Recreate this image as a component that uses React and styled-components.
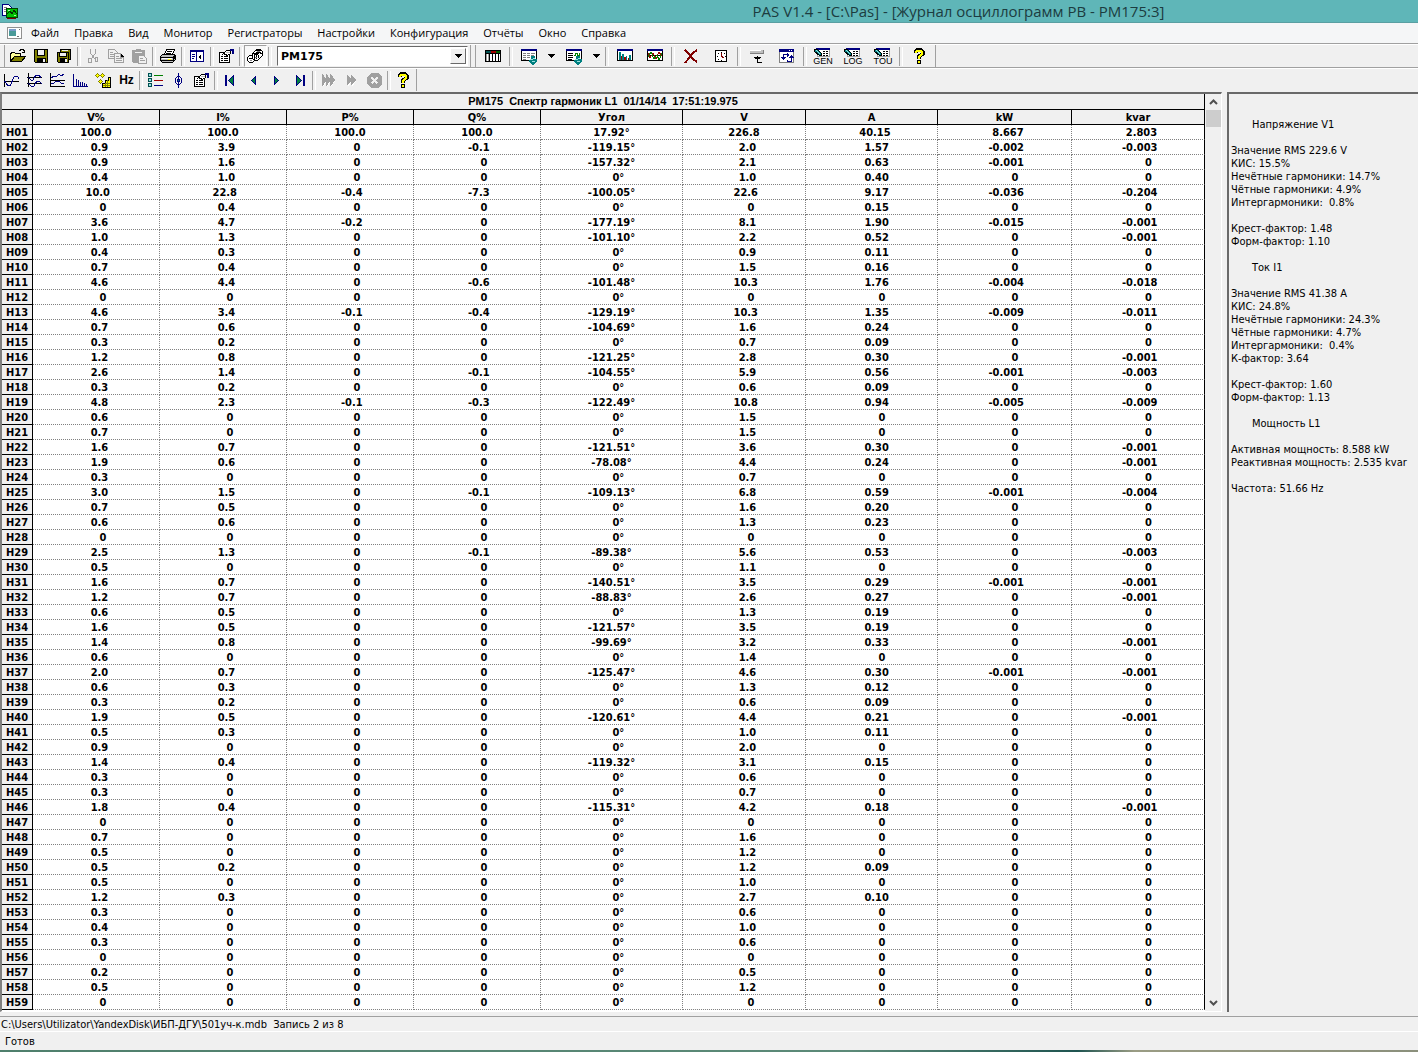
import styled, { createGlobalStyle } from "styled-components";

const menu = ['Файл', 'Правка', 'Вид', 'Монитор', 'Регистраторы', 'Настройки', 'Конфигурация', 'Отчёты', 'Окно', 'Справка'];

// minimum text length of a value: shorter ones are padded with leading spaces
const columns = [
    { title: 'V%', width: 127, pad: 5 },
    { title: 'I%', width: 127, pad: 5 },
    { title: 'P%', width: 127, pad: 5 },
    { title: 'Q%', width: 127, pad: 5 },
    { title: 'Угол', width: 142, pad: 5 },
    { title: 'V', width: 123, pad: 5 },
    { title: 'A', width: 132, pad: 7 },
    { title: 'kW', width: 134, pad: 7 },
    { title: 'kvar', width: 133, pad: 7 },
];

const harmonics = `
100.0 100.0 100.0 100.0 17.92 226.8 40.15 8.667 2.803
0.9 3.9 0 -0.1 -119.15 2.0 1.57 -0.002 -0.003
0.9 1.6 0 0 -157.32 2.1 0.63 -0.001 0
0.4 1.0 0 0 0 1.0 0.40 0 0
10.0 22.8 -0.4 -7.3 -100.05 22.6 9.17 -0.036 -0.204
0 0.4 0 0 0 0 0.15 0 0
3.6 4.7 -0.2 0 -177.19 8.1 1.90 -0.015 -0.001
1.0 1.3 0 0 -101.10 2.2 0.52 0 -0.001
0.4 0.3 0 0 0 0.9 0.11 0 0
0.7 0.4 0 0 0 1.5 0.16 0 0
4.6 4.4 0 -0.6 -101.48 10.3 1.76 -0.004 -0.018
0 0 0 0 0 0 0 0 0
4.6 3.4 -0.1 -0.4 -129.19 10.3 1.35 -0.009 -0.011
0.7 0.6 0 0 -104.69 1.6 0.24 0 0
0.3 0.2 0 0 0 0.7 0.09 0 0
1.2 0.8 0 0 -121.25 2.8 0.30 0 -0.001
2.6 1.4 0 -0.1 -104.55 5.9 0.56 -0.001 -0.003
0.3 0.2 0 0 0 0.6 0.09 0 0
4.8 2.3 -0.1 -0.3 -122.49 10.8 0.94 -0.005 -0.009
0.6 0 0 0 0 1.5 0 0 0
0.7 0 0 0 0 1.5 0 0 0
1.6 0.7 0 0 -121.51 3.6 0.30 0 -0.001
1.9 0.6 0 0 -78.08 4.4 0.24 0 -0.001
0.3 0 0 0 0 0.7 0 0 0
3.0 1.5 0 -0.1 -109.13 6.8 0.59 -0.001 -0.004
0.7 0.5 0 0 0 1.6 0.20 0 0
0.6 0.6 0 0 0 1.3 0.23 0 0
0 0 0 0 0 0 0 0 0
2.5 1.3 0 -0.1 -89.38 5.6 0.53 0 -0.003
0.5 0 0 0 0 1.1 0 0 0
1.6 0.7 0 0 -140.51 3.5 0.29 -0.001 -0.001
1.2 0.7 0 0 -88.83 2.6 0.27 0 -0.001
0.6 0.5 0 0 0 1.3 0.19 0 0
1.6 0.5 0 0 -121.57 3.5 0.19 0 0
1.4 0.8 0 0 -99.69 3.2 0.33 0 -0.001
0.6 0 0 0 0 1.4 0 0 0
2.0 0.7 0 0 -125.47 4.6 0.30 -0.001 -0.001
0.6 0.3 0 0 0 1.3 0.12 0 0
0.3 0.2 0 0 0 0.6 0.09 0 0
1.9 0.5 0 0 -120.61 4.4 0.21 0 -0.001
0.5 0.3 0 0 0 1.0 0.11 0 0
0.9 0 0 0 0 2.0 0 0 0
1.4 0.4 0 0 -119.32 3.1 0.15 0 0
0.3 0 0 0 0 0.6 0 0 0
0.3 0 0 0 0 0.7 0 0 0
1.8 0.4 0 0 -115.31 4.2 0.18 0 -0.001
0 0 0 0 0 0 0 0 0
0.7 0 0 0 0 1.6 0 0 0
0.5 0 0 0 0 1.2 0 0 0
0.5 0.2 0 0 0 1.2 0.09 0 0
0.5 0 0 0 0 1.0 0 0 0
1.2 0.3 0 0 0 2.7 0.10 0 0
0.3 0 0 0 0 0.6 0 0 0
0.4 0 0 0 0 1.0 0 0 0
0.3 0 0 0 0 0.6 0 0 0
0 0 0 0 0 0 0 0 0
0.2 0 0 0 0 0.5 0 0 0
0.5 0 0 0 0 1.2 0 0 0
0 0 0 0 0 0 0 0 0
`.trim().split('\n').map(line => line.split(' '));

const summary = [
    {
        title: 'Напряжение V1',
        groups: [
            ['Значение RMS 229.6 V', 'КИС: 15.5%', 'Нечётные гармоники: 14.7%', 'Чётные гармоники: 4.9%', 'Интергармоники:  0.8%'],
            ['Крест-фактор: 1.48', 'Форм-фактор: 1.10'],
        ],
    },
    {
        title: 'Ток I1',
        groups: [
            ['Значение RMS 41.38 A', 'КИС: 24.8%', 'Нечётные гармоники: 24.3%', 'Чётные гармоники: 4.7%', 'Интергармоники:  0.4%', 'К-фактор: 3.64'],
            ['Крест-фактор: 1.60', 'Форм-фактор: 1.13'],
        ],
    },
    {
        title: 'Мощность L1',
        groups: [
            ['Активная мощность: 8.588 kW', 'Реактивная мощность: 2.535 kvar'],
            ['Частота: 51.66 Hz'],
        ],
    },
];

const sheet = (
    <>
        <path fill="#fff" stroke="#000" d="M.5 2.5h15v10H.5z" />
        <path stroke="#000080" strokeWidth="2" d="M0 2h16" />
    </>
);

const deviceTag = (
    <>
        <path fill="#008080" d="M10 8h4v3h2v2l-4 4-5-4 3-3z" />
        <path stroke="#9fe0e0" d="M9 11.5h3M11 13.5h3M12 10.5h2" />
    </>
);

const properties = (
    <>
        <path fill="#fff" stroke="#000" d="M1.5 4.5h10v10h-10z" />
        <path stroke="#000" d="M3 8.5h2M6 8.5h4M3 10.5h2M6 10.5h4M3 12.5h2M6 12.5h4M4 6.5h1M5 5.5h1M6 4.5h1M7 3.5h2M7 6.5h3" />
        <path fill="#fff" stroke="#000" d="M5.5 5.5l3-3h4v3l-3 2z" />
        <path fill="#c0c0c0" d="M8 4h4v1H8z" />
        <path stroke="#000080" strokeWidth="2" d="M12 2h4M15 1v5" />
    </>
);

const question = (
    <>
        <path fill="none" stroke="#000" strokeWidth="4" d="M4.500 5V3.500L6 2h4l1.500 1.500V6L8 8.500V11" />
        <path fill="#000" d="M6 12h4v4H6z" />
        <path fill="none" stroke="#ffff00" strokeWidth="2" d="M5 5V3.500L6 2.500h4L11 4v2L8 8.500V11" />
        <path fill="#ffff00" d="M7 13h2v2H7z" />
    </>
);

const reader = (
    <>
        <path fill="#fff" stroke="#a0a0a0" d="M4.500 1.500h12v7h-12z" />
        <path stroke="#000080" strokeWidth="2" d="M3 1h14" />
        <path stroke="#000" d="M10 3.500h2M10 5.500h2M10 7.500h2M13 3.500h2M13 5.500h2M13 7.500h2" />
        <path fill="#008080" stroke="#000" d="M1.500 1.500h3l4 4v2h-2l-5-4z" />
        <path stroke="#9fe0e0" d="M3 2.500h1M4 3.500h1M5 4.500h1M6 5.500h1" />
    </>
);

const icons = {
    open: (
        <>
            <path fill="#ffff99" stroke="#000" d="M.5 13.500v-8h1v-1h3l1 1h5v3" />
            <path fill="#808000" stroke="#000" d="M.5 13.500l4-5h11l-4 5z" />
            <path fill="none" stroke="#000" d="M9 2.500h1v-1h3v1h1v2M12 4.500h3M14.500 2v3" />
        </>
    ),
    save: (
        <>
            <path fill="#808000" stroke="#000" d="M1.500 1.500h13v13h-12l-1-1z" />
            <path fill="#f0f0f0" stroke="#000" d="M4.500 1.500h7v6h-7z" />
            <path fill="#000" d="M4 10h9v5H4z" />
            <path fill="#f0f0f0" d="M10 11h2v3h-2z" />
        </>
    ),
    saveAll: (
        <>
            <path fill="#808000" stroke="#000" d="M4.500 1.500h10v10h-10z" />
            <path fill="#808000" stroke="#000" d="M1.500 4.500h11v10h-10l-1-1z" />
            <path fill="#f0f0f0" stroke="#000" d="M3.500 4.500h7v4h-7z" />
            <path fill="#000" d="M4 10h7v5H4z" />
            <path fill="#f0f0f0" d="M9 11h2v3H9zM6 2h6v1H6z" />
        </>
    ),
    cut: (
        <path fill="none" stroke="#a0a0a0" d="M5.500 1v4l4 6M10.500 1v4l-4 6M4 10.500h2v4H3.500v-3zM10 9.500h2.500v4H10v-4z" />
    ),
    copy: (
        <>
            <path fill="#f0f0f0" stroke="#a0a0a0" d="M.5 1.500h6l3 3v6h-9z" />
            <path fill="#f0f0f0" stroke="#a0a0a0" d="M6.500 5.500h6l3 3v6h-9z" />
            <path stroke="#a0a0a0" d="M2 4.500h3M2 6.500h4M2 8.500h4M8 8.500h3M8 10.500h6M8 12.500h6M12.500 5v4H16" />
        </>
    ),
    paste: (
        <>
            <path fill="#a0a0a0" d="M1 2h4V1h5v1h4v13H2l-1-1z" />
            <path fill="#f0f0f0" stroke="#a0a0a0" d="M7.500 7.500h5l3 3v5h-8z" />
            <path stroke="#a0a0a0" d="M9 10.500h3M9 12.500h5" />
            <path stroke="#f0f0f0" d="M4 4.500h7" />
        </>
    ),
    print: (
        <>
            <path fill="#fff" stroke="#000" d="M4.500 6.500l2-5h8l-2 5z" />
            <path stroke="#000" d="M7 3.500h5M6 5.500h5" />
            <path fill="#c0c0c0" stroke="#000" d="M.5 8.500l2-2h12l1 1v4l-3 3h-10l-2-2z" />
            <path stroke="#000" d="M1 9.500h12M1 12.500h12M13.500 8v5M14.500 7v4" />
            <path stroke="#ffff00" d="M8 11.500h3" />
            <path stroke="#fff" d="M2 10.500h10" />
        </>
    ),
    panel: (
        <>
            <path fill="#fff" stroke="#000080" d="M1.500 2.500h13v11h-13z" />
            <path stroke="#000080" strokeWidth="2" d="M1 3h14" />
            <path stroke="#000080" d="M7.500 3v11M3 6.500h3M3 8.500h3M3 10.500h2" />
            <path fill="#000" d="M9 9l3-3v6z" />
        </>
    ),
    properties,
    link: (
        <>
            <path fill="#fff" stroke="#000" d="M.5 9.500l2-2h3l2 2v3l-2 2h-3l-2-2z" />
            <path fill="#fff" stroke="#000" d="M5.500 5.500l4-4h4l2 2v4l-5 5h-3l-2-2z" />
            <path fill="none" stroke="#000" d="M7.500 12V7l3-3h2l2 2M9.500 11V7l2-2M11.500 10V7M5 7v3M2 10.500h3M9 2.500h5M6 5.500h3" />
            <path stroke="#808080" d="M3 12.500h2M10 3.500h3M8 9.500h2" />
        </>
    ),
    cabinet: (
        <>
            <path fill="#fff" stroke="#000" d="M.5 2.500h15v11H.5z" />
            <path fill="#005050" d="M1 3h5v2H1z" />
            <path fill="#a00000" d="M6 3h5v2H6z" />
            <path fill="#006000" d="M11 3h4v2h-4z" />
            <path stroke="#000" d="M0 5.500h16M4.500 5v9M7.500 5v9M10.500 5v9M13.500 5v9" />
            <path stroke="#a0a0a0" d="M1.500 6v7M3.500 6v7" />
        </>
    ),
    dataTable: (
        <>
            {sheet}
            <path stroke="#808080" d="M2 5.500h3M6 5.500h3M10 5.500h4M2 7.500h3M6 7.500h3M10 7.500h3M2 9.500h3M6 9.500h3M2 11.500h3" />
            {deviceTag}
        </>
    ),
    dataReport: (
        <>
            {sheet}
            <path stroke="#000" d="M2 5.500h5M2 7.500h5M2 9.500h5M2 11.500h4" />
            <path fill="none" stroke="#008000" d="M8 7.500h1v-2h2v2h2v-2h1" />
            {deviceTag}
        </>
    ),
    bars: (
        <>
            {sheet}
            <path fill="#008080" d="M2 4h2v8H2zM5 6h2v6H5zM9 8h1v4H9zM12 7h2v5h-2z" />
            <path fill="#a00000" d="M4 8h1v4H4zM7 9h2v3H7zM11 10h1v2h-1z" />
        </>
    ),
    waves: (
        <>
            {sheet}
            <path stroke="#000" d="M1 7.500h14" />
            <path fill="none" stroke="#a00000" d="M1 5l2 5 3-5 3 6 3-7 3 4" />
            <path fill="none" stroke="#008000" d="M1 9l3-5 3 7 3-4 2 5 3-7" />
        </>
    ),
    remove: (
        <path fill="none" stroke="#800000" strokeWidth="2" d="M2 2l4 4 4 5 4 3M14 2l-4 3-4 5-4 5" />
    ),
    clock: (
        <>
            <path fill="#fff" stroke="#000" d="M2.500 2.500h11v11h-11z" />
            <path fill="none" stroke="#800000" d="M8.500 4v4l2 2" />
            <path stroke="#000" d="M8 4.500h1M8 12.500h1M4 8.500h1M12 8.500h1M5 5.500h1M11 5.500h1M5 11.500h1" />
        </>
    ),
    port: (
        <>
            <path fill="#c0c0c0" d="M1 2h14v4H1z" />
            <path stroke="#fff" d="M1 2.500h11" />
            <path stroke="#808080" d="M1 5.500h14M14.500 2v4" />
            <path fill="none" stroke="#000" d="M5 9.500h7M8.500 8v6h4M6 10.500h5" />
        </>
    ),
    exchange: (
        <>
            <path fill="#fff" stroke="#808080" d="M.5 2.500h14v12H.5z" />
            <path stroke="#000080" strokeWidth="3" d="M0 2.500h15" />
            <path stroke="#fff" d="M10 2.500h1M12 2.500h1" />
            <path fill="none" stroke="#000080" d="M4.500 12V6.500h4M12.500 7v6h-4" />
            <path fill="#000080" d="M2 9h5l-2.500 3zM10 10h5l-2.500-3zM8 5l2 2-2 2zM9 11v4l-2-2z" />
        </>
    ),
    curve: (
        <>
            <path fill="none" stroke="#000" d="M1.500 2v13M1 9.500h15" />
            <path fill="none" stroke="#000080" d="M1.500 9l3 4h3l4-9h3l1.500 3" />
        </>
    ),
    curves: (
        <>
            <path fill="none" stroke="#000" d="M2.500 1v14M1 5.500h15M1 11.500h15" />
            <path fill="none" stroke="#000080" d="M2 5l3 3h2l3-5h3l2 3M2 11l3 3h3l3-5h2l3 3" />
        </>
    ),
    trends: (
        <>
            <path fill="none" stroke="#000" d="M1.500 1v13.500H16M1 8.500h15" />
            <path fill="none" stroke="#000080" d="M2 6l3-2 2 1 3-3 2 2 3-2M2 12l3-1 2-2h3l2 2 3 1" />
        </>
    ),
    spectrum: (
        <path fill="none" stroke="#000080" d="M1.500 2v12.500H16M4.500 7v7M6.500 8v6M8.500 10v4M10.500 10v4M12.500 11v3M14.500 12v2" />
    ),
    phases: (
        <>
            <path fill="#ffff00" stroke="#808000" d="M2.500 1.500l2 2-2 2-2-2zM7.500 1.500l2 2-2 2-2-2zM5.500 7.500l2 2-2 2-2-2z" />
            <path fill="#ffff00" stroke="#000" d="M7.500 15.500v-4h3v-3h3v-3h2v10z" />
            <path stroke="#808000" d="M8 13.500h7M10 11.500h5M12.500 8v7M10.500 11v4" />
        </>
    ),
    legend: (
        <>
            <path fill="#9fe0e0" stroke="#005050" d="M1.500 1.500h3v3h-3zM1.500 6.500h3v3h-3zM1.500 11.500h3v3h-3z" />
            <path stroke="#008000" d="M7 3.500h9" />
            <path stroke="#a00000" d="M7 8.500h9" />
            <path stroke="#000080" d="M7 13.500h9" />
        </>
    ),
    marker: (
        <>
            <path stroke="#000080" d="M8.500 1v15" />
            <path fill="none" stroke="#000080" d="M8.500 3.500l3 3v4l-3 3-3-3v-4z" />
            <path fill="#008080" stroke="#000080" d="M7.500 7.500h2v2h-2z" />
        </>
    ),
    first: (
        <>
            <path fill="#000080" d="M3 3h2v11H3z" />
            <path fill="#008040" stroke="#000080" d="M6.500 8.500l5-5v10z" />
        </>
    ),
    prev: <path fill="#008040" stroke="#000080" d="M6.500 8.500l4-4v8z" />,
    next: <path fill="#008040" stroke="#000080" d="M10.500 8.500l-4-4v8z" />,
    last: (
        <>
            <path fill="#000080" d="M12 3h2v11h-2z" />
            <path fill="#008040" stroke="#000080" d="M10.500 8.500l-5-5v10z" />
        </>
    ),
    fastForward: (
        <>
            <path fill="#fff" d="M3 3l4 6-4 6zM7 3l4 6-4 6zM11 3l4 6-4 6z" />
            <path fill="#a0a0a0" d="M2 2h1l3 5V2h1l3 5V2h1l4 6-4 6h-1V9l-3 5H6V9l-3 5H2z" />
        </>
    ),
    forward: (
        <>
            <path fill="#fff" d="M5 3l4 6-4 6zM9 3l4 6-4 6z" />
            <path fill="#a0a0a0" d="M4 3h1l3 4V3h1l4 5-4 5H8V9l-3 4H4z" />
        </>
    ),
    stop: (
        <>
            <path fill="#a0a0a0" d="M5 1h7l4 4v7l-4 4H5l-4-4V5z" />
            <path stroke="#f0f0f0" strokeWidth="2" d="M5.500 5.500l6 6M11.500 5.500l-6 6" />
        </>
    ),
    question,
};

const mainTools = [
    ['open', 'Открыть'], ['save', 'Сохранить'], ['saveAll', 'Сохранить всё'], null,
    ['cut', 'Вырезать'], ['copy', 'Копировать'], ['paste', 'Вставить'], null,
    ['print', 'Печать'], null,
    ['panel', 'Панель'], null,
    ['properties', 'Свойства'], null,
    ['link', 'Связь'], null,
];

const graphTools = [
    ['curve', 'Осциллограмма'], ['curves', 'Осциллограммы'], ['trends', 'Тренды'], ['spectrum', 'Спектр'], ['phases', 'Фазы'], ['Hz', 'Частота'], null,
    ['legend', 'Легенда'], ['marker', 'Маркер'], ['properties', 'Свойства'], null,
    ['first', 'Первая запись'], ['prev', 'Предыдущая запись'], ['next', 'Следующая запись'], ['last', 'Последняя запись'], null,
    ['fastForward', 'Ускоренно'], ['forward', 'Воспроизвести'], ['stop', 'Стоп'], null,
    ['question', 'Справка'],
];

const deviceTools = [
    ['cabinet', 'Устройства'], null,
    ['dataTable', 'Таблица'], 'more', ['dataReport', 'Отчёт'], 'more', null,
    ['bars', 'Гистограмма'], ['waves', 'Графики'], null,
    ['remove', 'Удалить'], ['clock', 'Время'], null,
    ['port', 'Порт'], ['exchange', 'Обмен'], null,
    ['GEN', 'Общие'], ['LOG', 'Журнал'], ['TOU', 'Тарифы'], null,
    ['question', 'Помощь'],
];

function Tool({ name, label, wide }) {
    if (name === 'Hz') {
        return <ToolButton aria-label={label}><HzText>Hz</HzText></ToolButton>;
    }
    if (!icons[name]) {
        return (
            <ToolButton $wide={wide} aria-label={label}>
                <Captioned>
                    <Icon width="20" height="9" viewBox="0 0 20 9">{reader}</Icon>
                    <Caption>{name}</Caption>
                </Captioned>
            </ToolButton>
        );
    }
    return (
        <ToolButton $wide={wide} $pressed={name === 'link'} aria-label={label}>
            <Icon width="17" height="17" viewBox="0 0 17 17">{icons[name]}</Icon>
        </ToolButton>
    );
}

function Tools({ items, wide }) {
    return items.map((item, i) => {
        if (!item) return <Separator key={i} />;
        if (item === 'more') {
            return (
                <MoreButton key={i} aria-label="Ещё">
                    <Icon width="7" height="4" viewBox="0 0 7 4"><path d="M0 0h7L3.500 4z" /></Icon>
                </MoreButton>
            );
        }
        return <Tool key={i} name={item[0]} label={item[1]} wide={wide} />;
    });
}

function Harmonics() {
    return (
        <Table>
            <colgroup>
                <Col $width={31} />
                {columns.map((c, i) => <Col key={i} $width={c.width} />)}
            </colgroup>
            <caption>PM175  Спектр гармоник L1  01/14/14  17:51:19.975</caption>
            <thead>
                <tr>
                    <th></th>
                    {columns.map((c, i) => <th key={i} scope="col">{c.title}</th>)}
                </tr>
            </thead>
            <tbody>
                {harmonics.map((row, i) => (
                    <tr key={i}>
                        <th scope="row">H{String(i + 1).padStart(2, '0')}</th>
                        {row.map((value, j) => (
                            <td key={j}>{value.padStart(columns[j].pad)}{j === 4 && '°'}</td>
                        ))}
                    </tr>
                ))}
            </tbody>
        </Table>
    );
}

export default function App() {
    return (
        <Window>
            <GlobalStyle />
            <TitleBar>
                <Icon width="17" height="17" viewBox="0 0 17 17">
                    <path fill="#fff" stroke="#000080" d="M.5 1.500h6l3 3v8h-9z" />
                    <path stroke="#808080" d="M2 4.500h3M2 6.500h2M2 8.500h2" />
                    <path fill="#00c000" stroke="#004000" d="M4.500 5.500h11v9h-11z" />
                    <path fill="none" stroke="#003000" d="M5 11l3-3 2 3 2-4 3 4" />
                    <path stroke="#a0ffa0" d="M6 7.500h2M12 12.500h2" />
                    <path stroke="#800000" d="M5 15.500h9" />
                </Icon>
                <h1>PAS V1.4 - [C:\Pas] - [Журнал осциллограмм РВ - PM175:3]</h1>
            </TitleBar>
            <MenuBar>
                <Icon width="16" height="14" viewBox="0 0 16 14">
                    <path fill="#fff" stroke="#909090" d="M.5 1.500h14v11H.5z" />
                    <path fill="#4a9a98" d="M2 4h7v6H2z" />
                    <path fill="#7a9ac8" d="M2 3h7v2H2z" />
                    <path stroke="#707070" d="M12 3.500h1M10 10.500h2" />
                </Icon>
                {menu.map(item => <MenuItem key={item}>{item}</MenuItem>)}
            </MenuBar>
            <ToolBar>
                <ToolGroup $first>
                    <Tools items={mainTools} />
                    <DeviceBox>
                        <DeviceSelect aria-label="Устройство" defaultValue="PM175">
                            <option>PM175</option>
                        </DeviceSelect>
                        <DropMark>
                            <Icon width="7" height="4" viewBox="0 0 7 4"><path d="M0 0h7L3.500 4z" /></Icon>
                        </DropMark>
                    </DeviceBox>
                </ToolGroup>
                <ToolGroup $first>
                    <Tools items={deviceTools} wide />
                </ToolGroup>
            </ToolBar>
            <ToolBar>
                <ToolGroup>
                    <Tools items={graphTools} />
                </ToolGroup>
            </ToolBar>
            <Content>
                <TablePane>
                    <TableView><Harmonics /></TableView>
                    <ScrollBar>
                        <ScrollButton aria-label="Вверх">
                            <svg width="9" height="6" viewBox="0 0 9 6"><path fill="none" stroke="#505050" strokeWidth="2" d="M1 5l3.500-3.500L8 5" /></svg>
                        </ScrollButton>
                        <Thumb />
                        <ScrollButton aria-label="Вниз">
                            <svg width="9" height="6" viewBox="0 0 9 6"><path fill="none" stroke="#505050" strokeWidth="2" d="M1 1l3.500 3.500L8 1" /></svg>
                        </ScrollButton>
                    </ScrollBar>
                </TablePane>
                <SidePane>
                    {summary.map(block => (
                        <section key={block.title}>
                            <h2>{block.title}</h2>
                            {block.groups.map((lines, i) => (
                                <Lines key={i}>
                                    {lines.map(line => <p key={line}>{line}</p>)}
                                </Lines>
                            ))}
                        </section>
                    ))}
                </SidePane>
            </Content>
            <PathBar>C:\Users\Utilizator\YandexDisk\ИБП-ДГУ\501уч-к.mdb  Запись 2 из 8</PathBar>
            <StatusBar>Готов</StatusBar>
            <Desktop />
        </Window>
    );
}

const GlobalStyle = createGlobalStyle`
    * {
        box-sizing: border-box;
    }
    body {
        margin: 0;
        background: #f0f0f0;
        color: #000;
        font-family: "DejaVu Sans Condensed", "DejaVu Sans", sans-serif;
        font-size: 11px;
    }
    button {
        border: none;
        background: none;
        padding: 0;
        font: inherit;
        color: inherit;
    }
    h1, h2, p {
        margin: 0;
        font-weight: normal;
    }
`
const Window = styled.div`
    height: 100vh;
    display: flex;
    flex-direction: column;
    overflow: hidden;
`
const Icon = styled.svg`
    display: block;
    flex: none;
    shape-rendering: crispEdges;
`
const TitleBar = styled.header`
    flex: none;
    height: 23px;
    display: flex;
    align-items: center;
    padding: 0 2px;
    background: #5fb6b8;
    border-bottom: 1px solid #5a9fa2;
    & h1 {
        flex: 1;
        padding-left: 482px;
        text-align: center;
        font-family: "Open Sans", sans-serif;
        font-size: 15px;
        line-height: 20px;
        color: #1c3c40;
        white-space: nowrap;
    }
`
const MenuBar = styled.nav`
    flex: none;
    height: 20px;
    display: flex;
    align-items: center;
    padding: 0 7px;
    gap: 1px;
    background: #f5f6f7;
    font-family: "Open Sans", sans-serif;
    font-size: 11px;
`
const MenuItem = styled.button`
    padding: 0 7px;
    line-height: 18px;
`
const ToolBar = styled.div`
    flex: none;
    height: 24px;
    display: flex;
    padding-top: 1px;
    border-top: 1px solid #a0a0a0;
    box-shadow: inset 0 1px #fff;
`
const ToolGroup = styled.div`
    display: flex;
    align-items: center;
    padding-right: 1px;
    padding-left: ${props => props.$first ? '2px' : '0'};
    margin-left: ${props => props.$first ? '4px' : '0'};
    border-left: ${props => props.$first ? '1px solid #a0a0a0' : 'none'};
    border-right: 1px solid #a0a0a0;
`
const ToolButton = styled.button`
    width: ${props => props.$wide ? '30px' : '23px'};
    height: 22px;
    display: flex;
    align-items: center;
    justify-content: center;
    ${props => props.$pressed && `
        background: #f8f8f8;
        border: 1px solid;
        border-color: #a0a0a0 #fff #fff #a0a0a0;
    `}
`
const MoreButton = styled.button`
    width: 15px;
    height: 22px;
    display: flex;
    align-items: center;
    justify-content: center;
`
const Separator = styled.span`
    width: 6px;
    height: 19px;
    display: flex;
    justify-content: center;
    &::before {
        content: '';
        width: 2px;
        border-left: 1px solid #a0a0a0;
        border-right: 1px solid #fff;
    }
`
const HzText = styled.span`
    font-family: "Liberation Sans", Arial, sans-serif;
    font-size: 12px;
    font-weight: bold;
`
const Captioned = styled.span`
    display: flex;
    flex-direction: column;
    align-items: center;
`
const Caption = styled.span`
    font-family: "Liberation Sans", Arial, sans-serif;
    font-size: 9px;
    line-height: 8px;
`
const DeviceBox = styled.div`
    position: relative;
    width: 191px;
    height: 20px;
    margin: 0 1px 0 4px;
    border: 1px solid;
    border-color: #696969 #fff #fff #696969;
`
const DeviceSelect = styled.select`
    appearance: none;
    display: block;
    width: 100%;
    height: 100%;
    padding: 0 20px 0 3px;
    border: none;
    border-radius: 0;
    background: #fff;
    color: #000;
    font-family: "DejaVu Sans", sans-serif;
    font-size: 11px;
    font-weight: bold;
`
const DropMark = styled.span`
    position: absolute;
    top: 1px;
    right: 1px;
    bottom: 1px;
    width: 16px;
    display: flex;
    align-items: center;
    justify-content: center;
    background: #f0f0f0;
    border: 1px solid;
    border-color: #fff #696969 #696969 #fff;
    pointer-events: none;
`
const Content = styled.main`
    flex: 1;
    min-height: 0;
    display: grid;
    grid-template-columns: minmax(0, 1222fr) minmax(0, 191fr);
    grid-template-rows: minmax(0, 1fr);
    gap: 5px;
    padding-top: 1px;
`
const TablePane = styled.div`
    display: flex;
    border: 2px solid;
    border-color: #696969 #fff #fff #808080;
    border-width: 2px 1px 1px 2px;
`
const TableView = styled.div`
    flex: 1;
    min-width: 0;
    overflow: hidden;
    background: #fff;
`
const Table = styled.table`
    width: 100%;
    table-layout: fixed;
    border-collapse: separate;
    border-spacing: 0;
    font-weight: bold;
    white-space: pre;
    text-align: center;
    & caption {
        height: 16px;
        line-height: 15px;
        background: #f0f0f0;
        border-bottom: 1px solid #000;
        border-right: 1px solid #000;
        font-family: "Liberation Sans", Arial, sans-serif;
    }
    & th, & td {
        height: 15px;
        padding: 1px 0 0;
        line-height: 13px;
        border-right: 1px dotted #808080;
        border-bottom: 1px dotted #808080;
    }
    & th {
        background: #f0f0f0;
        border-color: #000;
        border-style: solid;
        border-width: 0 1px 1px 0;
    }
    & td:last-child {
        border-right: 1px solid #000;
    }
`
const Col = styled.col`
    width: ${props => props.$width}px;
`
const ScrollBar = styled.div`
    flex: none;
    width: 16px;
    display: flex;
    flex-direction: column;
    padding-left: 1px;
    background: #f0f0f0;
`
const ScrollButton = styled.button`
    height: 16px;
    display: flex;
    align-items: center;
    justify-content: center;
    &:last-child {
        margin-top: auto;
    }
`
const Thumb = styled.div`
    height: 17px;
    background: #cdcdcd;
`
const SidePane = styled.aside`
    overflow: hidden;
    padding: 24px 0 0 2px;
    border-top: 2px solid #696969;
    border-left: 2px solid #696969;
    line-height: 13px;
    white-space: pre;
    & h2 {
        padding: 0 21px 13px;
        font-size: 11px;
    }
`
const Lines = styled.div`
    padding-bottom: 13px;
`
const PathBar = styled.div`
    flex: none;
    height: 16px;
    margin-top: 4px;
    padding-left: 1px;
    border-top: 1px solid #a0a0a0;
    border-bottom: 1px solid #fff;
    line-height: 16px;
    white-space: pre;
`
const StatusBar = styled.footer`
    flex: none;
    height: 18px;
    padding-left: 5px;
    line-height: 20px;
`
const Desktop = styled.div`
    flex: none;
    height: 2px;
    background: linear-gradient(90deg, #4f7f6c 0%, #5c8a78 60%, #1f5450 76%, #9a9c84 80%, #8b907c 100%);
`
